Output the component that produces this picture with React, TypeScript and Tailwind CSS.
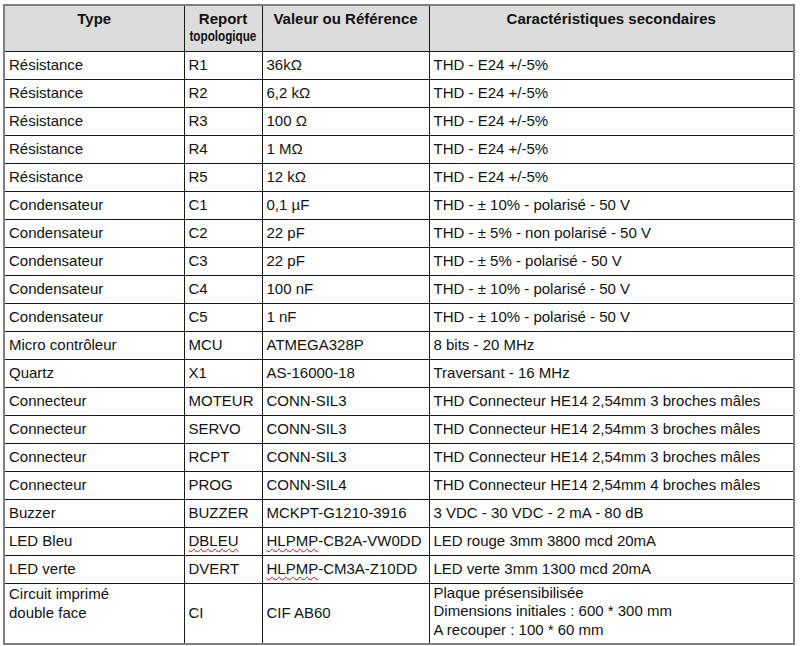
const rows: [string, string, string, string][] = [
  ['Résistance', 'R1', '36kΩ', 'THD - E24 +/-5%'],
  ['Résistance', 'R2', '6,2 kΩ', 'THD - E24 +/-5%'],
  ['Résistance', 'R3', '100 Ω', 'THD - E24 +/-5%'],
  ['Résistance', 'R4', '1 MΩ', 'THD - E24 +/-5%'],
  ['Résistance', 'R5', '12 kΩ', 'THD - E24 +/-5%'],
  ['Condensateur', 'C1', '0,1 µF', 'THD - ± 10% - polarisé - 50 V'],
  ['Condensateur', 'C2', '22 pF', 'THD - ± 5% - non polarisé - 50 V'],
  ['Condensateur', 'C3', '22 pF', 'THD - ± 5% - polarisé - 50 V'],
  ['Condensateur', 'C4', '100 nF', 'THD - ± 10% - polarisé - 50 V'],
  ['Condensateur', 'C5', '1 nF', 'THD - ± 10% - polarisé - 50 V'],
  ['Micro contrôleur', 'MCU', 'ATMEGA328P', '8 bits - 20 MHz'],
  ['Quartz', 'X1', 'AS-16000-18', 'Traversant - 16 MHz'],
  ['Connecteur', 'MOTEUR', 'CONN-SIL3', 'THD Connecteur HE14 2,54mm 3 broches mâles'],
  ['Connecteur', 'SERVO', 'CONN-SIL3', 'THD Connecteur HE14 2,54mm 3 broches mâles'],
  ['Connecteur', 'RCPT', 'CONN-SIL3', 'THD Connecteur HE14 2,54mm 3 broches mâles'],
  ['Connecteur', 'PROG', 'CONN-SIL4', 'THD Connecteur HE14 2,54mm 4 broches mâles'],
  ['Buzzer', 'BUZZER', 'MCKPT-G1210-3916', '3 VDC - 30 VDC - 2 mA - 80 dB'],
];

// words flagged by the spell checker in the original document
const Squiggle = ({ children }: { children: React.ReactNode }) => (
  <span className="underline decoration-wavy decoration-red-600 decoration-1 underline-offset-2">
    {children}
  </span>
);

const cell = 'border border-[#1a1a1a] px-[4px] py-0 h-[28px] align-middle whitespace-nowrap';
const head = 'border border-[#1a1a1a] pt-[4px] align-top font-bold';

export default function App() {
  return (
    <div className="bg-white min-h-screen pt-[4px] pl-[3px] text-[#111] text-[15px] leading-[18px] font-['Liberation_Sans',Arial,sans-serif]">
      <table className="table-fixed border-collapse border-2 border-[#7f7f7f] w-[790px]">
        <colgroup>
          <col className="w-[180px]" />
          <col className="w-[78px]" />
          <col className="w-[167px]" />
          <col className="w-[365px]" />
        </colgroup>
        <thead>
          <tr className="bg-[#dcdcdc]">
            <th className={`${head} h-[46px]`}>Type</th>
            <th className={`${head} leading-[17px]`}>
              <div>Report</div>
              {/* condensed in the source document so it fits the narrow column */}
              <div className="flex justify-center">
                <span className="shrink-0 scale-x-[0.78]">topologique</span>
              </div>
            </th>
            <th className={head}>Valeur ou Référence</th>
            <th className={head}>Caractéristiques secondaires</th>
          </tr>
        </thead>
        <tbody>
          {rows.map((r, i) => (
            <tr key={i}>
              <td className={cell}>{r[0]}</td>
              <td className={cell}>{r[1]}</td>
              <td className={cell}>{r[2]}</td>
              <td className={cell}>{r[3]}</td>
            </tr>
          ))}
          <tr>
            <td className={cell}>LED Bleu</td>
            <td className={cell}>
              <Squiggle>DBLEU</Squiggle>
            </td>
            <td className={cell}>
              <Squiggle>HLPMP</Squiggle>-CB2A-VW0DD
            </td>
            <td className={cell}>LED rouge 3mm 3800 mcd 20mA</td>
          </tr>
          <tr>
            <td className={cell}>LED verte</td>
            <td className={cell}>DVERT</td>
            <td className={cell}>
              <Squiggle>HLPMP</Squiggle>-CM3A-Z10DD
            </td>
            <td className={cell}>LED verte 3mm 1300 mcd 20mA</td>
          </tr>
          <tr>
            <td className="border border-[#1a1a1a] px-[4px] pt-0 h-[61px] align-top leading-[19px]">
              Circuit imprimé
              <br />
              double face
            </td>
            <td className="border border-[#1a1a1a] px-[4px] align-middle">CI</td>
            <td className="border border-[#1a1a1a] px-[4px] align-middle">CIF AB60</td>
            <td className="border border-[#1a1a1a] px-[4px] pt-0 align-top leading-[18.5px]">
              Plaque présensibilisée
              <br />
              Dimensions initiales : 600 * 300 mm
              <br />A recouper : 100 * 60 mm
            </td>
          </tr>
        </tbody>
      </table>
    </div>
  );
}
